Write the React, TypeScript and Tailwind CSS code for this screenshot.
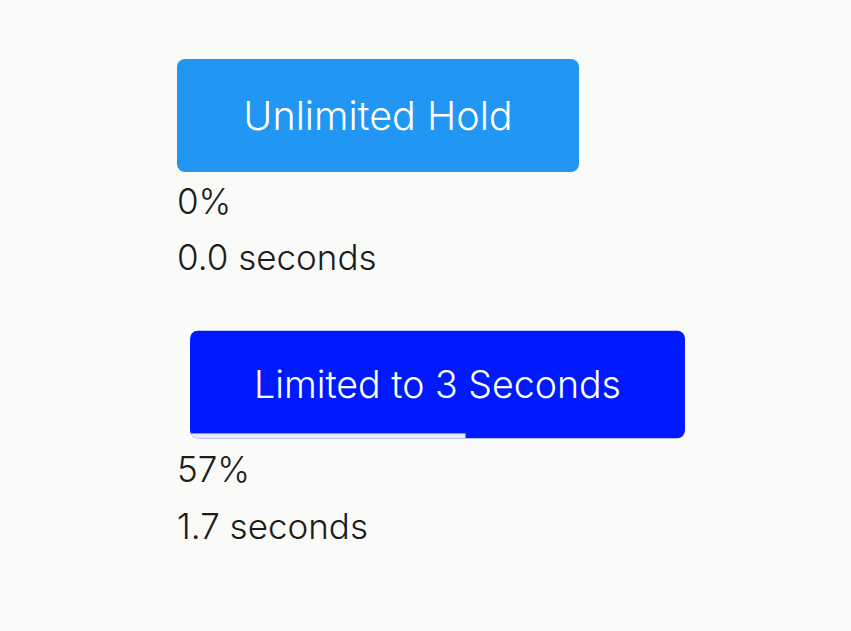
import React from 'react';

export default function App() {
    const progress = 55.6;

    return (
        <div className="min-h-screen bg-[#fafaf8] pt-[59px] pl-[177px] font-['Inter',sans-serif] font-[270] text-[35px] text-[#1c1c1c]">
            {/* Unlimited hold */}
            <div>
                <button className="w-[402px] h-[113px] pt-[2px] rounded-lg bg-[#2196f3] text-white text-[39.5px]">
                    Unlimited Hold
                </button>
                <p className="mt-[1px] leading-[56px]">0%</p>
                <p className="leading-[56px]">0.0 seconds</p>
            </div>

            {/* Limited hold, pressed */}
            <div className="mt-[43px]">
                <button className="relative w-[521px] h-[113px] pt-[2px] rounded-lg bg-[#0019ff] text-white text-[39.5px] overflow-hidden scale-95">
                    Limited to 3 Seconds
                    <span
                        className="absolute left-0 bottom-0 h-[5px] bg-[#e8eaf6]"
                        style={{ width: `${progress}%` }}
                    />
                </button>
                <p className="leading-[57px]">57%</p>
                <p className="leading-[57px]">1.7 seconds</p>
            </div>
        </div>
    );
}
